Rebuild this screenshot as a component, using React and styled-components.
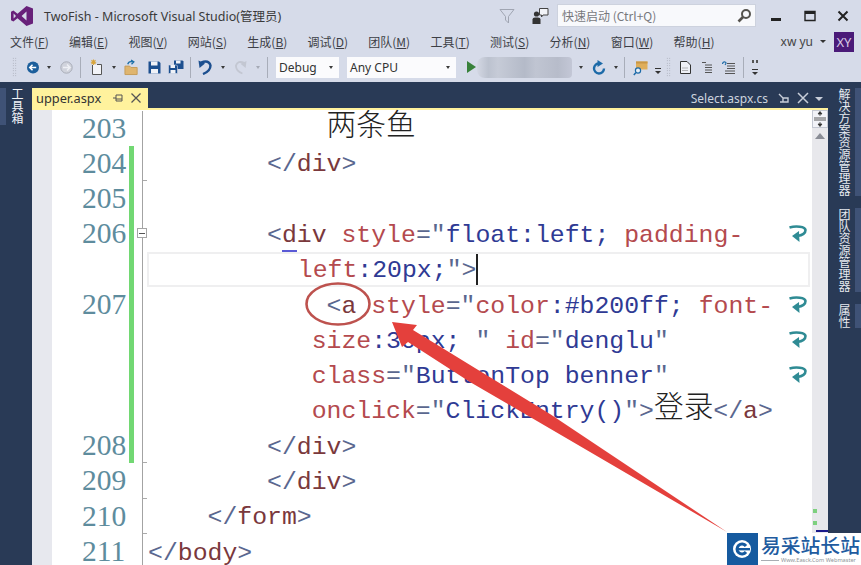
import React from "react";
import styled, { createGlobalStyle } from "styled-components";

const Global = createGlobalStyle`
  html, body { margin: 0; padding: 0; background: #d6dbe9; overflow: hidden; }
  #root { width: 861px; height: 565px; }
`;
const UI = `"Noto Sans", "Noto Sans CJK SC", sans-serif`;
const CJK = `"Noto Sans CJK SC", "Noto Sans", sans-serif`;

const Shell = styled.div`
  position: relative; width: 861px; height: 565px; overflow: hidden;
  display: flex; flex-direction: column; background: #d6dbe9; font-family: ${UI}; color: #333;
`;
const TitleBar = styled.div`display: flex; align-items: center; height: 31px; padding: 0 0 0 11px;`;
const Logo = styled.svg`width: 22px; height: 20px; margin-right: 11px;`;
const Title = styled.div`font-size: 12.5px; color: #3a3a3a; flex: 1; white-space: nowrap;`;
const TitleIcon = styled.svg`width: ${p => p.$w || 16}px; height: 18px; margin-right: ${p => p.$mr || 0}px;`;
const Search = styled.div`
  width: 199px; height: 23px; margin-left: 8px; background: #f8f9fc; border: 1px solid #cdd2de; box-sizing: border-box;
  display: flex; align-items: center; justify-content: space-between; padding: 0 3px 0 4px;
  font: 12px ${CJK}; color: #77787c;
`;
const WinButtons = styled.div`display: flex; width: 105px; justify-content: space-between; padding: 0 10px 0 13px; box-sizing: border-box;`;
const WinIcon = styled.svg`width: 16px; height: 14px;`;

const MenuBar = styled.div`display: flex; align-items: center; height: 21px; padding: 0 7px 0 10px;`;
const MenuItems = styled.div`display: flex; gap: 20.25px; flex: 1;`;
const MenuItem = styled.span`font: 12px ${CJK}; color: #3d3f46; white-space: nowrap; u { text-underline-offset: 1px; }`;
const UserName = styled.span`font: 12px ${UI}; color: #444; margin-right: 7px;`;
const UserCaret = styled.span`width: 0; height: 0; border: 3px solid transparent; border-top: 3px solid #333; margin: 3px 8px 0 0;`;
const Avatar = styled.div`width: 20px; height: 20px; background: #4a1a78; color: #d7c8e4; font: 13px/20px ${UI}; text-align: center;`;

const Toolbar = styled.div`display: flex; align-items: center; height: 30px; padding-left: 12px; box-sizing: border-box;`;
const Slot = styled.div`width: ${p => p.$w}px; height: 20px; display: flex; align-items: center; justify-content: center; flex: none;`;
const Space = styled.div`width: ${p => p.$w}px; flex: none;`;
const Grip = styled.div`width: 5px; height: 20px; flex: none; background-image: radial-gradient(#a0a4b0 0.7px, transparent 0.8px); background-size: 2.5px 2.5px;`;
const Sep = styled.div`width: 1px; height: 21px; background: #a8adb9; flex: none;`;
const Caret = styled.span`width: 0; height: 0; border: 2.5px solid transparent; border-top: 3px solid ${p => p.$dim ? "#a5a9b5" : "#3a3a3a"}; margin-top: 3px;`;
const Combo = styled.div`
  width: ${p => p.$w}px; height: 21px; background: #fbfbfd; display: flex; align-items: center; justify-content: space-between;
  padding: 0 6px 0 3px; box-sizing: border-box; font: 12px ${UI}; color: #333; flex: none; margin-right: ${p => p.$mr || 0}px;
`;
const Blurred = styled.div`
  width: 95px; height: 21px; border-radius: 8px 4px 4px 8px; flex: none;
  background: linear-gradient(90deg, #d3d7e3, #bcc2cf 12%, #c6cbd7 22%, #b4bac8 50%, #c0c5d2 62%, #b7bcca 85%, #c3c7d6);
`;

const Main = styled.div`display: flex; flex: 1; min-height: 0; background: #293a56;`;
const LeftRail = styled.div`width: 32px; flex: none; padding-top: 6px; box-sizing: border-box;`;
const RightRail = styled.div`width: 33px; flex: none; padding-top: 6px; box-sizing: border-box; display: flex; flex-direction: column; gap: 12px;`;
const LeftTab = styled.div`
  writing-mode: vertical-rl; border-left: 6px solid #3f5276; width: 24px; height: 37px; box-sizing: border-box;
  font: 12px/14px ${CJK}; color: #f2f4f8; white-space: nowrap;
`;
const RightTab = styled.div`
  writing-mode: vertical-rl; border-right: 6px solid #3f5276; padding-right: 4px; box-sizing: border-box; height: ${p => p.$h}px;
  font: 12px/14px ${CJK}; color: #e6e9ef; white-space: nowrap;
`;

const Doc = styled.div`flex: 1; display: flex; flex-direction: column; min-width: 0;`;
const TabStrip = styled.div`display: flex; justify-content: space-between; align-items: flex-end; height: 26px; padding-right: 3px; border-bottom: 2px solid #fff29d;`;
const ActiveTab = styled.div`
  width: 116px; height: 20px; background: #fff29d; box-sizing: border-box; padding: 0 6px 0 4px;
  display: flex; align-items: center; font: 12.8px ${UI}; color: #333;
`;
const TabName = styled.span`flex: 1; white-space: nowrap;`;
const OtherTabs = styled.div`display: flex; align-items: center; height: 20px; font: 12px ${UI}; color: #cdd4df;`;
const TabIcon = styled.svg`width: 12px; height: 12px; margin-left: ${p => p.$ml || 0}px;`;

const EditorWrap = styled.div`flex: 1; display: flex; min-height: 0; background: #fff;`;
const OuterMargin = styled.div`width: 20px; flex: none; background: #e7e8ee;`;
const Lines = styled.div`flex: 1; min-width: 0; padding-top: 0.5px; position: relative;`;
const Line = styled.div`display: flex; height: 35.3px; font: 24.8px/33px "Liberation Mono", monospace;`;
const Num = styled.div`
  width: 77px; flex: none; box-sizing: border-box; padding: 1px 0 0 30px; color: #5e8c9d;
  font: 29.5px/33px "Liberation Serif", serif;
`;
const Bar = styled.div`width: 5px; flex: none; background: ${p => p.$on ? "#72d873" : "transparent"};`;
const Gap = styled.div`width: 8px; flex: none;`;
const Outline = styled.div`
  width: 6px; flex: none; border-left: 1.5px solid #a3a3a3; box-sizing: border-box; position: relative;
  ${p => p.$tick && `&::after { content: ""; position: absolute; left: 0; bottom: 0; width: 4px; height: 1px; background: #aaa; }`}
`;
const Fold = styled.div`
  position: absolute; left: -6px; top: 12px; width: 10px; height: 10px; border: 1px solid #a5a5a5; background: #fff; box-sizing: border-box;
  &::after { content: ""; position: absolute; left: 1px; right: 1px; top: 3.5px; height: 1px; background: #555; }
`;
const Code = styled.div`
  flex: 1; min-width: 0; white-space: pre; box-sizing: border-box; padding: 2.6px 0 0 ${p => p.$i}ch; position: relative;
  ${p => p.$current && `border: 2px solid #efeff0; margin: 0 -22px 0 -1px; padding-top: 0.6px;`}
`;
const WrapCell = styled.div`width: 24px; flex: none; display: flex; align-items: center; padding-left: 1px; box-sizing: border-box;`;
const Delim = styled.span`color: #5a678f;`;
const Tag = styled.span`color: #7a383c;`;
const Attr = styled.span`color: #b44a4e;`;
const Val = styled.span`color: #2f3a94;`;
const Cn = styled.span`font: 300 29.7px/0 "Noto Sans CJK SC", sans-serif; color: #222; position: relative; top: -1px;`;
const Marked = styled.span`
  position: relative; color: #7a383c;
  &::after { content: ""; position: absolute; left: 0; width: 15px; bottom: -3px; height: 2px; background: #5a5ad6; }
`;
const Cursor = styled.span`position: absolute; top: 0; width: 1.5px; height: 31px; background: #222;`;

const Scroll = styled.div`width: 16px; flex: none; background: #e8e8ec; position: relative; display: flex; flex-direction: column; align-items: center;`;
const Splitter = styled.svg`width: 16px; height: 18px; background: #f2f3f8; border: 1px solid #c4c8d2; box-sizing: border-box;`;
const ScrollUp = styled.span`width: 0; height: 0; margin-top: 5px; border: 5px solid transparent; border-bottom: 6px solid #8a8d96; border-top: none;`;
const ScrollMarks = styled.div`position: absolute; left: 0; bottom: 28px; display: flex; flex-direction: column; gap: 8px; padding-left: 1px;`;
const ScrollMark = styled.i`display: block; width: 4px; height: 4px; background: #7ed07f;`;
const ScrollCaret = styled.div`position: absolute; left: 4px; right: 0; bottom: 33px; height: 2px; background: #1a1a8a;`;

const Overlay = styled.svg`position: absolute; left: 0; top: 0; pointer-events: none;`;
const Watermark = styled.div`
  position: absolute; right: 0; bottom: 0; width: 134px; height: 32px; background: #fff; display: flex;
`;
const WmLogo = styled.svg`width: 31px; height: 32px; flex: none;`;
const WmText = styled.div`padding-left: 3px; display: flex; flex-direction: column; overflow: hidden;`;
const WmName = styled.div`font: 500 19.8px/23px ${CJK}; color: #215b9f; white-space: nowrap;`;
const WmFoot = styled.div`display: flex; align-items: center; gap: 2px; margin-top: 1px;`;
const WmRule = styled.i`display: block; width: 18px; height: 1px; background: #a9adb3;`;
const WmUrl = styled.div`font: 5.6px/7px ${UI}; color: #8f9399; white-space: nowrap;`;

const WrapGlyph = () => (
  <svg width="18" height="18" viewBox="0 0 18 18">
    <path d="M0.5 2.5C7 0.5 16 1.5 16.5 5C16.5 9 12 10.5 8 11" fill="none" stroke="#2f8b94" strokeWidth="2.6" />
    <path d="M10 6L3 11L10.5 17Z" fill="#2f8b94" />
  </svg>
);
const Drop = ({ dim }) => <Slot $w={9}><Caret $dim={dim} /></Slot>;

const menus = [["文件","F"],["编辑","E"],["视图","V"],["网站","S"],["生成","B"],["调试","D"],["团队","M"],["工具","T"],["测试","S"],["分析","N"],["窗口","W"],["帮助","H"]];

const Row = ({ n, on, tick, fold, wrap, i = 0, current, children }) => (
  <Line>
    <Num>{n}</Num>
    <Bar $on={on} />
    <Gap />
    <Outline $tick={tick}>{fold && <Fold />}</Outline>
    <Code $i={i} $current={current}>{children}</Code>
    <WrapCell>{wrap && <WrapGlyph />}</WrapCell>
  </Line>
);

export default function App() {
  return (
    <Shell>
      <Global />
      <TitleBar>
        <Logo viewBox="0 0 22 20">
          <path d="M15.5 0L22 2.6V17.4L15.5 20L6.5 12.2L2.4 15.4L0 14.2V5.8L2.4 4.6L6.5 7.8ZM15.5 5.6L10.6 10L15.5 14.4ZM2.6 7.6V12.4L5 10Z" fill="#68217a" fillRule="evenodd" />
        </Logo>
        <Title>TwoFish - Microsoft Visual Studio(管理员)</Title>
        <TitleIcon $w={16} $mr={17} viewBox="0 0 16 18">
          <path d="M1 2.5H15L9.5 9.5V16L6.5 13V9.5Z" fill="none" stroke="#a0a5b2" strokeWidth="1" />
        </TitleIcon>
        <TitleIcon $w={17} viewBox="0 0 17 18">
          <circle cx="4.5" cy="7" r="2.6" fill="#333" />
          <path d="M0.5 17V12.5Q0.5 10.5 3 10.5H6Q8.5 10.5 8.5 12.5V17Z" fill="#333" />
          <path d="M7.5 1.5H16V8H11L9.5 10V8H7.5Z" fill="#f3f4f8" stroke="#444" />
        </TitleIcon>
        <Search>
          <span>快速启动 (Ctrl+Q)</span>
          <svg width="16" height="16" viewBox="0 0 16 16">
            <circle cx="10" cy="6" r="4" fill="none" stroke="#55534e" strokeWidth="2" />
            <path d="M7 9L2.5 13.5" stroke="#55534e" strokeWidth="2.6" />
          </svg>
        </Search>
        <WinButtons>
          <WinIcon viewBox="0 0 16 14"><rect x="2" y="9" width="10" height="3" fill="#222" /></WinIcon>
          <WinIcon viewBox="0 0 16 14"><path d="M3 2.5H13V11.5H3Z" fill="none" stroke="#222" strokeWidth="1.4" /><rect x="3" y="2" width="10" height="3" fill="#222" /></WinIcon>
          <WinIcon viewBox="0 0 16 14"><path d="M3.5 2.5L12.5 11.5M12.5 2.5L3.5 11.5" stroke="#222" strokeWidth="2" /></WinIcon>
        </WinButtons>
      </TitleBar>

      <MenuBar>
        <MenuItems>
          {menus.map(([t, k]) => <MenuItem key={t}>{t}(<u>{k}</u>)</MenuItem>)}
        </MenuItems>
        <UserName>xw yu</UserName>
        <UserCaret />
        <Avatar>XY</Avatar>
      </MenuBar>

      <Toolbar>
        <Grip />
        <Space $w={10} />
        <Slot $w={12}>
          <svg width="13" height="13" viewBox="0 0 13 13"><circle cx="6.5" cy="6.5" r="6.5" fill="#1c5f9c" /><path d="M3 6.5H10M6 3.5L3 6.5L6 9.5" fill="none" stroke="#fff" strokeWidth="1.7" /></svg>
        </Slot>
        <Space $w={5} />
        <Drop />
        <Space $w={7} />
        <Slot $w={13}>
          <svg width="13" height="13" viewBox="0 0 13 13"><circle cx="6.5" cy="6.5" r="5.7" fill="#d0d3dc" stroke="#a9adb8" /><path d="M3 6.5H10M7 3.5L10 6.5L7 9.5" fill="none" stroke="#eef0f5" strokeWidth="1.5" /></svg>
        </Slot>
        <Space $w={7} />
        <Sep />
        <Space $w={9} />
        <Slot $w={14}>
          <svg width="14" height="17" viewBox="0 0 14 17">
            <path d="M2.5 6V15.5H11.5V5.5H7" fill="#f3f4f8" stroke="#555" />
            <path d="M3.5 0.5V6M0.8 3.2H6.2M1.5 1.2L5.5 5.2M5.5 1.2L1.5 5.2" stroke="#d8a53b" strokeWidth="1.1" />
          </svg>
        </Slot>
        <Space $w={5} />
        <Drop />
        <Space $w={6} />
        <Slot $w={15}>
          <svg width="16" height="17" viewBox="0 0 16 17">
            <path d="M1 7H6L7.5 8.5H14V16H1Z" fill="#dfb56f" stroke="#c49b58" />
            <path d="M4 5Q5 1.5 9 2.5M7.5 0.5L10.5 2.5L8 5" fill="none" stroke="#1c6fa8" strokeWidth="1.4" />
          </svg>
        </Slot>
        <Space $w={8} />
        <Slot $w={14}>
          <svg width="13" height="13" viewBox="0 0 13 13"><path d="M0.5 0.5H11L12.5 2V12.5H0.5Z" fill="#1c4f8f" /><rect x="3" y="0.5" width="6.5" height="4" fill="#f0f2f7" /><rect x="3" y="8" width="7" height="4.5" fill="#f0f2f7" /></svg>
        </Slot>
        <Space $w={7} />
        <Slot $w={16}>
          <svg width="16" height="14" viewBox="0 0 16 14"><path d="M6 0.5H14.5L15.5 1.5V9H6Z" fill="#1c4f8f" /><rect x="8" y="0.5" width="4.5" height="3" fill="#f0f2f7" /><path d="M0.5 5H8.5L9.5 6V13.5H0.5Z" fill="#1c4f8f" stroke="#d6dbe9" strokeWidth="0.6" /><rect x="2.5" y="5" width="4.5" height="3" fill="#f0f2f7" /><rect x="2.5" y="10" width="5" height="3.5" fill="#f0f2f7" /></svg>
        </Slot>
        <Space $w={6} />
        <Sep />
        <Space $w={7} />
        <Slot $w={14}>
          <svg width="14" height="15" viewBox="0 0 14 15"><path d="M3 2.5Q11 -0.5 12.5 5.5Q12.5 11 5 14" fill="none" stroke="#1c4f8f" strokeWidth="2.4" /><path d="M0.5 0.5L1.5 8L7 3.5Z" fill="#1c4f8f" /></svg>
        </Slot>
        <Space $w={6} />
        <Drop />
        <Space $w={8} />
        <Slot $w={12}>
          <svg width="13" height="15" viewBox="0 0 13 15"><path d="M10 2.5Q3 -0.5 1 5.5Q1 11 8 14" fill="none" stroke="#c3c7d2" strokeWidth="2" /><path d="M12.5 0.5L11.5 8L6 3.5Z" fill="#c3c7d2" /></svg>
        </Slot>
        <Space $w={6} />
        <Drop dim />
        <Space $w={5} />
        <Sep />
        <Space $w={8} />
        <Combo $w={63} $mr={8}>Debug<Caret /></Combo>
        <Combo $w={109}>Any CPU<Caret /></Combo>
        <Space $w={10} />
        <Slot $w={10}>
          <svg width="9" height="12" viewBox="0 0 9 12"><path d="M0 0L9 6L0 12Z" fill="#38813a" /></svg>
        </Slot>
        <Space $w={1} />
        <Blurred />
        <Space $w={4} />
        <Drop />
        <Space $w={7} />
        <Slot $w={14}>
          <svg width="14" height="15" viewBox="0 0 14 15"><path d="M7.5 3.5A5 5 0 1 0 12 8.5" fill="none" stroke="#1c6aa8" strokeWidth="2.4" /><path d="M5.5 0L11 3.5L5.5 7Z" fill="#1c6aa8" /></svg>
        </Slot>
        <Space $w={5} />
        <Drop />
        <Space $w={4} />
        <Sep />
        <Space $w={8} />
        <Slot $w={16}>
          <svg width="16" height="17" viewBox="0 0 16 17">
            <path d="M3 2.5H14.5V10.5H3Z" fill="#dfae5a" /><path d="M3 2.5H14.5V4.5H3Z" fill="#c99745" />
            <circle cx="5" cy="11.5" r="2.6" fill="#e8edf5" stroke="#1c6aa8" strokeWidth="1.2" /><path d="M3 13.5L0.8 16" stroke="#1c6aa8" strokeWidth="1.5" />
          </svg>
        </Slot>
        <Space $w={4} />
        <Slot $w={9}>
          <svg width="8" height="16" viewBox="0 0 8 16"><rect x="1" y="9" width="6" height="1" fill="#333" /><path d="M1 12H7L4 15Z" fill="#333" /></svg>
        </Slot>
        <Space $w={4} />
        <Grip />
        <Space $w={9} />
        <Slot $w={11}>
          <svg width="11" height="13" viewBox="0 0 11 13"><path d="M0.5 0.5H7L10.5 4V12.5H0.5Z" fill="#eef0f6" stroke="#333" /><path d="M2.5 7H8.5M2.5 9.5H8.5" stroke="#777" strokeDasharray="1 1" /></svg>
        </Slot>
        <Space $w={11} />
        <Slot $w={10}>
          <svg width="10" height="11" viewBox="0 0 10 11"><path d="M0 0.5H4M3 3H10M3 5.5H10M3 8H10M3 10.5H10" stroke="#555" strokeWidth="1" /></svg>
        </Slot>
        <Space $w={10} />
        <Slot $w={13}>
          <svg width="13" height="13" viewBox="0 0 13 13"><path d="M0.5 3Q1 0.5 3 1Q5 1.5 3 4" fill="none" stroke="#1c6aa8" strokeWidth="1.2" /><path d="M5 2.5H13M5 5H13M5 7.5H13M3 10H13M3 12.5H13" stroke="#555" /></svg>
        </Slot>
        <Space $w={8} />
        <Sep />
        <Space $w={6} />
        <Slot $w={9}>
          <svg width="8" height="20" viewBox="0 0 8 20"><rect x="1" y="3" width="2" height="3" fill="#555" /><rect x="5" y="3" width="2" height="3" fill="#555" /><rect x="1" y="12" width="6" height="1" fill="#333" /><path d="M1 15H7L4 18Z" fill="#333" /></svg>
        </Slot>
      </Toolbar>

      <Main>
        <LeftRail><LeftTab>工具箱</LeftTab></LeftRail>
        <Doc>
          <TabStrip>
            <ActiveTab>
              <TabName>upper.aspx</TabName>
              <TabIcon viewBox="0 0 12 12"><path d="M1 6H4M4 3V9H10V3ZM4 7H10" fill="none" stroke="#555" /></TabIcon>
              <TabIcon $ml={6} viewBox="0 0 12 12"><path d="M1.5 1.5L10.5 10.5M10.5 1.5L1.5 10.5" stroke="#555" strokeWidth="1.3" /></TabIcon>
            </ActiveTab>
            <OtherTabs>
              <TabName>Select.aspx.cs</TabName>
              <TabIcon $ml={9} viewBox="0 0 12 12"><path d="M2 2L6 6V10H11V6H6M3 10H11" fill="none" stroke="#c8ced9" strokeWidth="1.4" /></TabIcon>
              <TabIcon $ml={8} viewBox="0 0 12 12"><path d="M1 1L11 11M11 1L1 11" stroke="#c8ced9" strokeWidth="1.5" /></TabIcon>
              <TabIcon $ml={4} viewBox="0 0 12 12"><path d="M2 5H10L6 9Z" fill="#c8ced9" /></TabIcon>
            </OtherTabs>
          </TabStrip>
          <EditorWrap>
            <OuterMargin />
            <Lines>
              <Row n="203" i={12}><Cn>两条鱼</Cn></Row>
              <Row n="204" on tick i={8}><Delim>&lt;/</Delim><Tag>div</Tag><Delim>&gt;</Delim></Row>
              <Row n="205" on />
              <Row n="206" on fold wrap i={8}><Delim>&lt;</Delim><Marked>d</Marked><Tag>iv</Tag> <Attr>style</Attr><Delim>="</Delim><Val>float:left;</Val> <Attr>padding-</Attr></Row>
              <Row on current i={10}><Attr>left</Attr><Val>:20px;</Val><Delim>"&gt;</Delim><Cursor /></Row>
              <Row n="207" on wrap i={12}><Delim>&lt;</Delim><Tag>a</Tag> <Attr>style</Attr><Delim>="</Delim><Attr>color</Attr><Val>:#b200ff;</Val> <Attr>font-</Attr></Row>
              <Row on wrap i={11}><Attr>size</Attr><Val>:30px;</Val> <Delim>"</Delim> <Attr>id</Attr><Delim>="</Delim><Val>denglu</Val><Delim>"</Delim></Row>
              <Row on wrap i={11}><Attr>class</Attr><Delim>="</Delim><Val>ButtonTop benner</Val><Delim>"</Delim></Row>
              <Row on i={11}><Attr>onclick</Attr><Delim>="</Delim><Val>ClickEntry()</Val><Delim>"&gt;</Delim><Cn>登录</Cn><Delim>&lt;/</Delim><Tag>a</Tag><Delim>&gt;</Delim></Row>
              <Row n="208" on tick i={8}><Delim>&lt;/</Delim><Tag>div</Tag><Delim>&gt;</Delim></Row>
              <Row n="209" tick i={8}><Delim>&lt;/</Delim><Tag>div</Tag><Delim>&gt;</Delim></Row>
              <Row n="210" tick i={4}><Delim>&lt;/</Delim><Tag>form</Tag><Delim>&gt;</Delim></Row>
              <Row n="211"><Delim>&lt;/</Delim><Tag>body</Tag><Delim>&gt;</Delim></Row>
            </Lines>
            <Scroll>
              <Splitter viewBox="0 0 14 16">
                <path d="M1 7H13M1 9H13M7 1V5M7 11V15M5 3L7 0.5L9 3ZM5 13L7 15.5L9 13Z" stroke="#333" fill="#333" strokeWidth="0.8" />
              </Splitter>
              <ScrollUp />
              <ScrollMarks><ScrollMark /><ScrollMark /><ScrollMark /></ScrollMarks>
              <ScrollCaret />
            </Scroll>
          </EditorWrap>
        </Doc>
        <RightRail>
          <RightTab $h={108}>解决方案资源管理器</RightTab>
          <RightTab $h={84}>团队资源管理器</RightTab>
          <RightTab $h={24}>属性</RightTab>
        </RightRail>
      </Main>

      <Overlay width="861" height="565" viewBox="0 0 861 565">
        <ellipse cx="338" cy="304" rx="31.5" ry="20.5" fill="none" stroke="#bd524e" strokeWidth="2.6" />
        <path d="M392 322L417 325L413 330L550 414L727 532L525 414L470 382L408 342L402 347Z" fill="#e4403c" />
      </Overlay>

      <Watermark>
        <WmLogo viewBox="0 0 31 32">
          <rect width="31" height="32" fill="#155a9f" />
          <circle cx="15" cy="16" r="9" fill="#fff" />
          <path d="M19 13A5 5 0 1 0 19 19" fill="none" stroke="#155a9f" strokeWidth="3" />
          <rect x="11" y="15" width="12" height="2.4" fill="#155a9f" />
        </WmLogo>
        <WmText>
          <WmName>易采站长站</WmName>
          <WmFoot><WmRule /><WmUrl>Www.Easck.Com Webmaster</WmUrl></WmFoot>
        </WmText>
      </Watermark>
    </Shell>
  );
}
